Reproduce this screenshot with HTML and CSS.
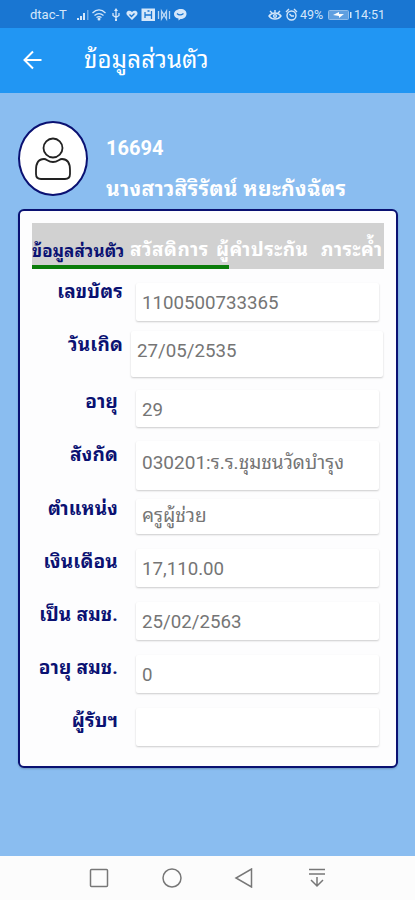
FILE: index.html
```html
<!DOCTYPE html>
<html lang="th">
<head>
    <meta charset="UTF-8">
    <meta name="viewport" content="width=device-width, initial-scale=1.0">
    <title>ข้อมูลส่วนตัว</title>
    <link rel="stylesheet" href="styles.css">
</head>
<body>

    <div class="status-bar">
        <span class="carrier">dtac-T</span>
        <svg class="status-left" width="112" height="14" viewBox="0 0 112 14">
            <g fill="#d5e7fa">
                <path d="M1 12h2v-2H1zM4 12h2V8H4zM7 12h2V5H7z"/>
                <path d="M11 12h1.500V2H11z" opacity=".45"/>
                <circle cx="23" cy="11" r="1.500"/>
                <path d="M40 0l2 3h-4zM39 13h2v-2h-2z"/>
                <path d="M56 12L51 7c-2-3 2-6 5-3 3-3 7 0 5 3z"/>
                <path d="M65.500 .500h13.500v12.500H65.500z"/>
                <path d="M104.500 1c4 0 6 2 6 5s-3 5-6 5l-2 1.500v-2c-3-.5-4.500-2-4.500-4.500s3-5 6.500-5z"/>
            </g>
            <g fill="none" stroke="#d5e7fa" stroke-width="1.300">
                <path d="M16.500 5c4-4 9-4 13 0M18.500 7.500c3-2.500 6-2.500 9 0M20.500 9.500c2-1.500 3-1.500 5 0"/>
                <path d="M40 2v10M37 5v2.500l3 2 3-2V5"/>
                <path d="M82.500 3v8M93.500 3v8M85.500 3v8l5-8v8z" opacity=".85"/>
            </g>
            <path d="M53.500 6.500l2 2 3-3M69 4v6M75.500 3v8M69 7h6M71.500 3h2M101 5.500c2 2 4 2 6.500 0" fill="none" stroke="#1976d2" stroke-width="1.300"/>
        </svg>
        <svg class="status-right" width="30" height="14" viewBox="0 0 30 14">
            <g fill="none" stroke="#d5e7fa" stroke-width="1.400">
                <path d="M1 8c3-4 9-4 12 0-3 4-9 4-12 0zM2 3l2 2M7 2v2.500M12 3l-2 2"/>
                <circle cx="7" cy="8" r="1.400"/>
                <circle cx="23.500" cy="7.500" r="4.500"/>
                <path d="M18 4l3-3M29 4l-3-3M21.500 6l2 2h2.500"/>
            </g>
        </svg>
        <span class="percent">49%</span>
        <svg class="battery" width="24" height="10" viewBox="0 0 24 10">
            <rect x=".5" y=".5" width="20" height="9" rx="1" fill="#5f9fe0" stroke="#8dbbea"/>
            <path d="M5 5l6-3v2h5l-5 4V6z" fill="#fff"/>
            <path d="M22 2h1.500v6H22z" fill="#d5e7fa"/>
        </svg>
        <span class="clock">14:51</span>
    </div>

    <header class="app-bar">
        <svg width="20" height="20" viewBox="0 0 20 20" fill="none" stroke="#fff" stroke-width="2">
            <path d="M18.500 10H2M10 1.500L1.500 10l8.500 8.500"/>
        </svg>
        <h1>ข้อมูลส่วนตัว</h1>
    </header>

    <main>
        <div class="profile">
            <div class="avatar">
                <svg width="38" height="46" viewBox="0 0 38 46" fill="#fff" stroke="#222" stroke-width="1.800">
                    <path d="M10 23C4 23 2 28 2 34v4c0 3 1 5 5 5h24c4 0 5-2 5-5v-4c0-6-2-11-8-11-3 0-4 3-9 3s-6-3-9-3z"/>
                    <circle cx="19" cy="12" r="9.500"/>
                </svg>
            </div>
            <div class="profile-text">
                <p class="member-no">16694</p>
                <p class="member-name">นางสาวสิริรัตน์ หยะกังฉัตร</p>
            </div>
        </div>

        <section class="card">
            <nav class="tabs">
                <a class="tab active">ข้อมูลส่วนตัว</a>
                <a class="tab welfare">สวัสดิการ</a>
                <a class="tab guarantor">ผู้คำประกัน</a>
                <a class="tab burden">ภาระค้ำ</a>
            </nav>

            <div class="row row-id"><label>เลขบัตร</label><div class="field">1100500733365</div></div>
            <div class="row row-birth"><label>วันเกิด</label><div class="field">27/05/2535</div></div>
            <div class="row row-age"><label>อายุ</label><div class="field">29</div></div>
            <div class="row row-school"><label>สังกัด</label><div class="field">030201:ร.ร.ชุมชนวัดบำรุง</div></div>
            <div class="row row-position"><label>ตำแหน่ง</label><div class="field">ครูผู้ช่วย</div></div>
            <div class="row"><label>เงินเดือน</label><div class="field">17,110.00</div></div>
            <div class="row"><label>เป็น สมช.</label><div class="field">25/02/2563</div></div>
            <div class="row"><label>อายุ สมช.</label><div class="field">0</div></div>
            <div class="row"><label>ผู้รับฯ</label><div class="field"></div></div>
        </section>
    </main>

    <footer class="nav-bar">
        <svg width="20" height="20" viewBox="0 0 20 20"><rect x="1.500" y="1.500" width="17" height="17" rx="1"/></svg>
        <svg width="20" height="20" viewBox="0 0 20 20"><circle cx="10" cy="10" r="9"/></svg>
        <svg width="20" height="20" viewBox="0 0 20 20"><path d="M17.500 1v18L2 10z"/></svg>
        <svg width="20" height="20" viewBox="0 0 20 20"><path d="M2 1.500h16M2 6h16M10 9v9M4 12l6 6 6-6"/></svg>
    </footer>

</body>
</html>
```
FILE: styles.css
```css
:root {
    --primary: #2196f3;
    --primary-dark: #1976d2;
    --page: #8abdf0;
    --navy: #0a1172;
}

* { box-sizing: border-box; margin: 0; padding: 0; }

body {
    width: 415px;
    height: 900px;
    display: flex;
    flex-direction: column;
    overflow: hidden;
    font-family: Roboto, "Noto Sans Thai Looped", "Noto Looped Thai", "Droid Sans Thai", Loma, Waree, "Noto Sans Thai", "Noto Sans", sans-serif;
    background-color: var(--page);
}

svg { display: block; flex: none; }

.status-bar {
    height: 28px;
    display: flex;
    align-items: center;
    padding: 1px 0 0 30px;
    background-color: var(--primary-dark);
    color: #d5e7fa;
    font-size: 12.500px;
    white-space: nowrap;
}

.carrier { width: 46px; font-size: 13px; }
.status-right { margin-left: 80px; }
.percent { width: 25px; margin-left: 2px; }
.battery { margin-left: 3px; }
.clock { margin-left: 2px; }

.app-bar {
    height: 65px;
    display: flex;
    align-items: center;
    padding: 0 0 1px 23px;
    background-color: var(--primary);
    color: #fff;
}

.app-bar h1 {
    margin-left: 41px;
    font-size: 24px;
    font-weight: 400;
    letter-spacing: 0.2px;
    line-height: 30px;
    white-space: nowrap;
}

main { flex: 1; padding: 28px 17px 0 18px; }

.profile { display: flex; height: 88px; }

.avatar {
    width: 70px;
    height: 75px;
    display: flex;
    align-items: center;
    justify-content: center;
    border: 2px solid var(--navy);
    border-radius: 50%;
    background-color: #fff;
}

.profile-text {
    padding: 15px 0 0 18px;
    color: #fff;
    font-size: 20px;
    font-weight: 700;
    line-height: 24px;
    white-space: nowrap;
}

.member-name { margin-top: 17px; font-size: 21px; letter-spacing: 0.3px; }

.card {
    height: 559px;
    padding: 12px;
    border: 2px solid var(--navy);
    border-radius: 6px;
    background-color: #fdfdfe;
    box-shadow: 0 1px 2px rgba(0,0,0,0.2);
}

.tabs {
    height: 46px;
    width: 352px;
    display: flex;
    align-items: center;
    margin-bottom: 7px;
    padding-top: 7px;
    overflow: hidden;
    background: linear-gradient(#0b7d0b, #0b7d0b) 0 100% / 197px 4px no-repeat #d1d1d1;
    color: #fff;
    font-size: 19px;
    font-weight: 700;
    letter-spacing: 0.5px;
    line-height: 26px;
    white-space: nowrap;
}

.tab { flex: none; }
.tab.active { width: 98px; padding-top: 2px; color: var(--navy); font-size: 17px; letter-spacing: 0.1px; }
.tab.welfare { width: 86px; }
.tab.guarantor { width: 105px; }

.row {
    --top: 5px;
    --height: 38px;
    height: 53px;
    display: flex;
    align-items: flex-start;
}

.row label {
    width: 86px;
    padding-top: 5px;
    color: var(--navy);
    font-size: 19px;
    font-weight: 700;
    letter-spacing: 0.2px;
    line-height: 26px;
    text-align: right;
    white-space: nowrap;
}

.field {
    width: 243px;
    height: var(--height);
    margin: var(--top) 0 0 18px;
    padding: 7px 6px 0;
    overflow: hidden;
    border-radius: 2px;
    background-color: #fff;
    box-shadow: 0 1px 2px rgba(0,0,0,0.2);
    color: #757575;
    font-size: 18.700px;
    line-height: 26px;
    white-space: nowrap;
}

.row-id { --top: 7px; }
.row-id label { width: 91px; padding-top: 3px; }
.row-id .field { margin-left: 13px; }

.row-birth { --top: 2px; --height: 46px; height: 55px; }
.row-birth label { width: 91px; padding-top: 3px; }
.row-birth .field { width: 252px; margin-left: 8px; }

.row-age { --top: 6px; --height: 37px; }
.row-school { --top: 4px; --height: 49px; height: 54px; }
.row-school .field { padding-top: 9px; font-size: 19px; }
.row-position { --top: 8px; --height: 35px; }
.row-position .field { padding-top: 4px; font-size: 19px; }

.nav-bar {
    height: 44px;
    display: flex;
    align-items: center;
    gap: 52.500px;
    padding-left: 89px;
    background-color: #fcfcfc;
    fill: none;
    stroke: #777;
    stroke-width: 1.500;
}
```
